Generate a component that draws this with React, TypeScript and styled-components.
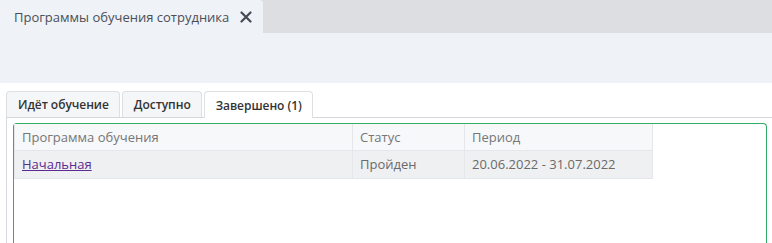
import React from 'react';
import styled, { createGlobalStyle } from 'styled-components';

const GlobalStyle = createGlobalStyle`
  html, body {
    margin: 0;
    padding: 0;
    background: #fff;
    font-family: 'Open Sans', 'Noto Sans', sans-serif;
  }
`;

const Page = styled.div`
  width: 772px;
  height: 243px;
  display: flex;
  flex-direction: column;
  overflow: hidden;
`;

const TopBar = styled.div`
  height: 33px;
  display: flex;
  background: #dcdee2;
`;

const DocTab = styled.div`
  width: 263px;
  box-sizing: border-box;
  padding: 0 11px 0 14px;
  display: flex;
  align-items: center;
  justify-content: space-between;
  background: #eff2f7;
  border-top-right-radius: 4px;
  font-size: 13px;
  color: #4a4f57;
`;

const CloseButton = styled.span`
  display: flex;
  align-items: center;
  color: #454a54;
`;

const Band = styled.div`
  height: 50px;
  background: #eff2f7;
`;

const Tabs = styled.div`
  flex: 1;
  display: flex;
  flex-direction: column;
  margin: 8px 0 0 6px;
`;

const TabList = styled.div`
  display: flex;
  gap: 2px;
  height: 26px;
  border-bottom: 1px solid #d6d8dd;
`;

const Tab = styled.div<{ $active?: boolean }>`
  display: flex;
  align-items: center;
  padding: 0 10px 0 11px;
  box-sizing: border-box;
  height: ${(p) => (p.$active ? '27px' : '26px')};
  border: 1px solid #dddfe3;
  border-bottom: none;
  border-radius: 4px 4px 0 0;
  background: ${(p) => (p.$active ? '#fff' : '#f5f6f8')};
  font-size: 12px;
  font-weight: 600;
  letter-spacing: -0.05px;
  color: #333;
  white-space: nowrap;
`;

const TabBody = styled.div`
  flex: 1;
  display: flex;
  padding: 5px 5px 0 6px;
  border-left: 1px solid #d9dbe0;
`;

const Panel = styled.div`
  flex: 1;
  border: 1px solid #33ad68;
  border-bottom: none;
  border-radius: 4px 4px 0 0;
`;

const Table = styled.table`
  border-collapse: collapse;
  width: 638px;
  table-layout: fixed;
  font-size: 13px;
`;

const HeadCell = styled.th<{ $w: number }>`
  width: ${(p) => p.$w}px;
  height: 26px;
  box-sizing: border-box;
  padding: 0 7px;
  text-align: left;
  font-weight: 400;
  color: #767676;
  background: #f7f8fa;
  border: 1px solid #e4e6ea;
  border-top: none;
`;

const Cell = styled.td`
  height: 28px;
  box-sizing: border-box;
  padding: 0 7px;
  color: #6a6a6a;
  background: #eff0f2;
  border: 1px solid #e4e6ea;
`;

const Link = styled.a`
  color: #5b2b8f;
  text-decoration: underline;
  cursor: pointer;
`;

export default function App() {
  return (
    <Page>
      <GlobalStyle />
      <TopBar>
        <DocTab>
          <span>Программы обучения сотрудника</span>
          <CloseButton>
            <svg width="12" height="12" viewBox="0 0 12 12">
              <path d="M1.5 1.5 L10.5 10.5 M10.5 1.5 L1.5 10.5" stroke="currentColor" strokeWidth="2.2" strokeLinecap="round" />
            </svg>
          </CloseButton>
        </DocTab>
      </TopBar>
      <Band />
      <Tabs>
        <TabList>
          <Tab>Идёт обучение</Tab>
          <Tab>Доступно</Tab>
          <Tab $active>Завершено (1)</Tab>
        </TabList>
        <TabBody>
          <Panel>
            <Table>
              <thead>
                <tr>
                  <HeadCell $w={338}>Программа обучения</HeadCell>
                  <HeadCell $w={112}>Статус</HeadCell>
                  <HeadCell $w={188}>Период</HeadCell>
                </tr>
              </thead>
              <tbody>
                <tr>
                  <Cell>
                    <Link>Начальная</Link>
                  </Cell>
                  <Cell>Пройден</Cell>
                  <Cell>20.06.2022 - 31.07.2022</Cell>
                </tr>
              </tbody>
            </Table>
          </Panel>
        </TabBody>
      </Tabs>
    </Page>
  );
}
